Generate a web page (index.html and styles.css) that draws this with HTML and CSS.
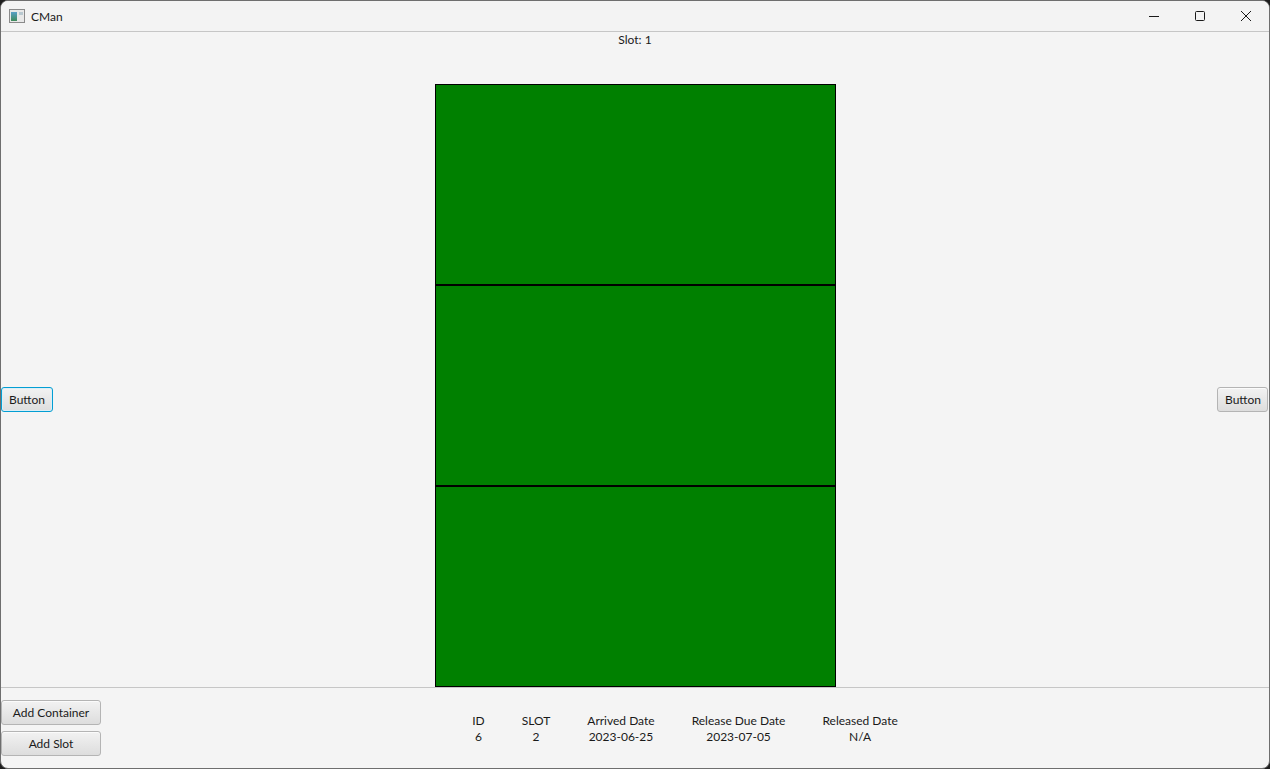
FILE: index.html
```html
<!DOCTYPE html>
<html lang="en">
<head>
  <meta charset="UTF-8">
  <title>CMan</title>
  <link rel="stylesheet" href="styles.css">
</head>
<body>

  <div class="window">
    <!-- title bar -->
    <div class="titlebar">
      <svg class="app-icon" width="16" height="14" viewBox="0 0 16 14">
        <defs>
          <linearGradient id="ig" x1="0" y1="0" x2="0" y2="1">
            <stop offset="0" stop-color="#5aa0c8"/>
            <stop offset="1" stop-color="#3f8a5a"/>
          </linearGradient>
        </defs>
        <rect x="0.5" y="0.5" width="15" height="13" fill="#e8e8e8" stroke="#8a8a8a"/>
        <rect x="2" y="3" width="6" height="9" fill="url(#ig)"/>
        <rect x="10" y="3" width="4" height="3" fill="#b8c8d0"/>
      </svg>
      <span class="title">CMan</span>
      <div class="controls">
        <div class="ctl">
          <svg width="12" height="12" viewBox="0 0 12 12"><path d="M1 6.5h10" stroke="#1a1a1a" stroke-width="1"/></svg>
        </div>
        <div class="ctl">
          <svg width="12" height="12" viewBox="0 0 12 12"><rect x="1.5" y="1.5" width="9" height="9" rx="1" fill="none" stroke="#1a1a1a" stroke-width="1"/></svg>
        </div>
        <div class="ctl">
          <svg width="12" height="12" viewBox="0 0 12 12"><path d="M1 1l10 10M11 1L1 11" stroke="#1a1a1a" stroke-width="1"/></svg>
        </div>
      </div>
    </div>

    <!-- main -->
    <div class="content">
      <div class="slot-label">Slot: 1</div>

      <div class="middle">
        <button class="fx-btn side-btn focused">Button</button>
        <div class="stack">
          <div class="box"></div>
          <div class="box"></div>
          <div class="box"></div>
        </div>
        <button class="fx-btn side-btn right">Button</button>
      </div>

      <div class="bottom">
        <div class="actions">
          <button class="fx-btn wide-btn">Add Container</button>
          <button class="fx-btn wide-btn">Add Slot</button>
        </div>
        <div class="info">
          <div class="info-grid">
            <span>ID</span>
            <span>SLOT</span>
            <span>Arrived Date</span>
            <span>Release Due Date</span>
            <span>Released Date</span>
            <span>6</span>
            <span>2</span>
            <span>2023-06-25</span>
            <span>2023-07-05</span>
            <span>N/A</span>
          </div>
        </div>
      </div>
    </div>
  </div>

</body>
</html>
```

FILE: styles.css
```css
* {
  box-sizing: border-box;
}

body {
  margin: 0;
  background: #1e1e1e;
  font-family: "Segoe UI", Lato, "Noto Sans", sans-serif;
  font-size: 12px;
  color: #1a1a1a;
}

.window {
  width: 1270px;
  height: 769px;
  background: #f4f4f4;
  border: 1px solid #6e6e6e;
  border-radius: 8px;
  overflow: hidden;
  display: flex;
  flex-direction: column;
}

.titlebar {
  height: 31px;
  flex: none;
  background: #f3f3f3;
  border-bottom: 1px solid #c6c6c6;
  display: flex;
  align-items: center;
  padding-left: 8px;
}

.app-icon {
  margin-right: 6px;
}

.title {
  font-size: 12px;
  color: #1a1a1a;
}

.controls {
  margin-left: auto;
  display: flex;
  height: 100%;
}

.ctl {
  width: 46px;
  height: 100%;
  display: flex;
  align-items: center;
  justify-content: center;
}

.content {
  flex: 1;
  display: flex;
  flex-direction: column;
}

.slot-label {
  text-align: center;
  height: 16px;
  line-height: 16px;
}

.middle {
  flex: 1;
  display: flex;
  align-items: flex-end;
  justify-content: space-between;
  border-bottom: 1px solid #c6c6c6;
}

.side-btn {
  align-self: flex-start;
  margin-top: 339px;
  width: 52px;
  padding: 0;
}

.side-btn.right {
  width: 51px;
  margin-right: 1px;
}

.stack {
  width: 401px;
  display: flex;
  flex-direction: column;
}

.box {
  height: 201px;
  background: #008000;
  border: 1px solid #000;
}

.fx-btn {
  font-family: "Segoe UI", Lato, "Noto Sans", sans-serif;
  font-size: 12px;
  color: #1a1a1a;
  height: 25px;
  padding: 0 7px;
  background: linear-gradient(#f2f2f2, #dddddd);
  border: 1px solid #b4b4b4;
  border-radius: 3px;
  box-shadow: inset 0 1px 0 #fbfbfb;
}

.fx-btn.focused {
  border: 1px solid #039ed3;
  box-shadow: inset 0 0 0 1px #dbeef6;
}

.bottom {
  height: 80px;
  flex: none;
  display: flex;
}

.actions {
  display: flex;
  flex-direction: column;
  gap: 6px;
  padding-top: 12px;
}

.wide-btn {
  width: 100px;
  height: 25px;
}

.info {
  flex: 1;
  display: flex;
  justify-content: center;
  padding-top: 25px;
}

.info-grid {
  display: grid;
  grid-template-columns: repeat(5, auto);
  column-gap: 37px;
  text-align: center;
  line-height: 16px;
  align-self: flex-start;
}
```
